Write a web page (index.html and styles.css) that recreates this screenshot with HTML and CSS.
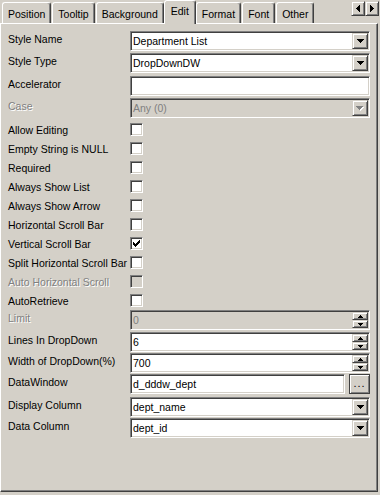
FILE: index.html
```html
<!DOCTYPE html>
<html lang="en">
<head>
  <meta charset="UTF-8">
  <title>Edit Style</title>
  <link rel="stylesheet" href="styles.css">
</head>
<body>
  <div class="tabs">
    <div class="tab">Position</div>
    <div class="tab">Tooltip</div>
    <div class="tab">Background</div>
    <div class="tab active">Edit</div>
    <div class="tab">Format</div>
    <div class="tab">Font</div>
    <div class="tab">Other</div>
    <div class="tab-scroll">
      <span class="btn scroll-btn"><svg width="4" height="7" viewBox="0 0 4 7"><path d="M3 0h1v7h-1v-1h-1v-1h-1v-1h-1v-1h1v-1h1v-1h1z"/></svg></span>
      <span class="btn scroll-btn"><svg width="4" height="7" viewBox="0 0 4 7"><path d="M0 0h1v1h1v1h1v1h1v1h-1v1h-1v1h-1v1h-1z"/></svg></span>
    </div>
  </div>

  <div class="panel">
    <div class="form">
      <div class="row">
        <div class="label">Style Name</div>
        <div class="field combo"><span class="value">Department List</span><span class="btn drop-btn"><svg width="7" height="4" viewBox="0 0 7 4"><path d="M0 0h7v1h-1v1h-1v1h-1v1h-1v-1h-1v-1h-1v-1h-1z"/></svg></span></div>
      </div>
      <div class="row tall">
        <div class="label">Style Type</div>
        <div class="field combo"><span class="value">DropDownDW</span><span class="btn drop-btn"><svg width="7" height="4" viewBox="0 0 7 4"><path d="M0 0h7v1h-1v1h-1v1h-1v1h-1v-1h-1v-1h-1v-1h-1z"/></svg></span></div>
      </div>
      <div class="row">
        <div class="label">Accelerator</div>
        <div class="field"><span class="value"></span></div>
      </div>
      <div class="row">
        <div class="label disabled">Case</div>
        <div class="field combo off"><span class="value">Any (0)</span><span class="btn drop-btn"><svg width="8" height="5" viewBox="0 0 8 5"><path class="shade" d="M1 1h7v1h-1v1h-1v1h-1v1h-1v-1h-1v-1h-1v-1h-1z"/><path class="grey" d="M0 0h7v1h-1v1h-1v1h-1v1h-1v-1h-1v-1h-1v-1h-1z"/></svg></span></div>
      </div>

      <div class="row check">
        <div class="label">Allow Editing</div>
        <span class="box"></span>
      </div>
      <div class="row check">
        <div class="label">Empty String is NULL</div>
        <span class="box"></span>
      </div>
      <div class="row check">
        <div class="label">Required</div>
        <span class="box"></span>
      </div>
      <div class="row check">
        <div class="label">Always Show List</div>
        <span class="box"></span>
      </div>
      <div class="row check">
        <div class="label">Always Show Arrow</div>
        <span class="box"></span>
      </div>
      <div class="row check">
        <div class="label">Horizontal Scroll Bar</div>
        <span class="box"></span>
      </div>
      <div class="row check">
        <div class="label">Vertical Scroll Bar</div>
        <span class="box"><svg width="7" height="7" viewBox="0 0 7 7"><path d="M0 2h1v3h-1z M1 3h1v3h-1z M2 4h1v3h-1z M3 3h1v3h-1z M4 2h1v3h-1z M5 1h1v3h-1z M6 0h1v3h-1z"/></svg></span>
      </div>
      <div class="row check">
        <div class="label">Split Horizontal Scroll Bar</div>
        <span class="box"></span>
      </div>
      <div class="row check">
        <div class="label disabled">Auto Horizontal Scroll</div>
        <span class="box off"></span>
      </div>
      <div class="row check">
        <div class="label">AutoRetrieve</div>
        <span class="box"></span>
      </div>

      <div class="row">
        <div class="label disabled">Limit</div>
        <div class="field spin off"><span class="value">0</span>
          <span class="spin-btns">
            <span class="btn spin-btn"><svg width="5" height="3" viewBox="0 0 5 3"><path d="M2 0h1v1h1v1h1v1h-5v-1h1v-1h1z"/></svg></span>
            <span class="btn spin-btn"><svg width="5" height="3" viewBox="0 0 5 3"><path d="M0 0h5v1h-1v1h-1v1h-1v-1h-1v-1h-1z"/></svg></span>
          </span>
        </div>
      </div>
      <div class="row short">
        <div class="label">Lines In DropDown</div>
        <div class="field spin"><span class="value">6</span>
          <span class="spin-btns">
            <span class="btn spin-btn"><svg width="5" height="3" viewBox="0 0 5 3"><path d="M2 0h1v1h1v1h1v1h-5v-1h1v-1h1z"/></svg></span>
            <span class="btn spin-btn"><svg width="5" height="3" viewBox="0 0 5 3"><path d="M0 0h5v1h-1v1h-1v1h-1v-1h-1v-1h-1z"/></svg></span>
          </span>
        </div>
      </div>
      <div class="row short">
        <div class="label">Width of DropDown(%)</div>
        <div class="field spin"><span class="value">700</span>
          <span class="spin-btns">
            <span class="btn spin-btn"><svg width="5" height="3" viewBox="0 0 5 3"><path d="M2 0h1v1h1v1h1v1h-5v-1h1v-1h1z"/></svg></span>
            <span class="btn spin-btn"><svg width="5" height="3" viewBox="0 0 5 3"><path d="M0 0h5v1h-1v1h-1v1h-1v-1h-1v-1h-1z"/></svg></span>
          </span>
        </div>
      </div>
      <div class="row tall">
        <div class="label">DataWindow</div>
        <div class="field-group">
          <div class="field text-short"><span class="value">d_dddw_dept</span></div>
          <span class="btn dots-btn">...</span>
        </div>
      </div>
      <div class="row short">
        <div class="label">Display Column</div>
        <div class="field combo"><span class="value">dept_name</span><span class="btn drop-btn"><svg width="7" height="4" viewBox="0 0 7 4"><path d="M0 0h7v1h-1v1h-1v1h-1v1h-1v-1h-1v-1h-1v-1h-1z"/></svg></span></div>
      </div>
      <div class="row">
        <div class="label">Data Column</div>
        <div class="field combo"><span class="value">dept_id</span><span class="btn drop-btn"><svg width="7" height="4" viewBox="0 0 7 4"><path d="M0 0h7v1h-1v1h-1v1h-1v1h-1v-1h-1v-1h-1v-1h-1z"/></svg></span></div>
      </div>
    </div>
  </div>
</body>
</html>
```

FILE: styles.css
```css
body {
  margin: 0;
  width: 380px;
  height: 495px;
  overflow: hidden;
  background-color: #d4d0c8;
  font-family: "Liberation Sans", Arial, sans-serif;
  font-size: 10.5px;
  color: #000;
}

svg {
  display: block;
  shape-rendering: crispEdges;
}

/* Tab strip */
.tabs {
  display: flex;
  align-items: flex-end;
  height: 23px;
  padding-left: 2px;
  user-select: none;
}

.tab {
  box-sizing: border-box;
  height: 21px;
  padding: 4px 5px 0;
  line-height: 14px;
  border: 1px solid;
  border-bottom: none;
  border-color: #fff #404040 transparent #fff;
  border-radius: 3px 3px 0 0;
  box-shadow: inset -1px 0 #808080;
  margin-right: 1px;
  white-space: nowrap;
}

.tab.active {
  position: relative;
  z-index: 1;
  height: 24px;
  margin: 0 0 -1px -1px;
  padding: 3px 6px 0;
  background-color: #d4d0c8;
}

.tab-scroll {
  display: flex;
  align-self: flex-start;
  margin: 1px 1px 0 auto;
}

/* Raised button look */
.btn {
  box-sizing: border-box;
  display: flex;
  align-items: center;
  justify-content: center;
  background-color: #d4d0c8;
  border: 1px solid;
  border-color: #d4d0c8 #404040 #404040 #d4d0c8;
  box-shadow: inset 1px 1px #fff, inset -1px -1px #808080;
}

.scroll-btn {
  width: 14px;
  height: 15px;
}

/* Panel */
.panel {
  box-sizing: border-box;
  width: 378px;
  height: 469px;
  border: 1px solid;
  border-color: #fff #404040 #404040 #fff;
  box-shadow: inset -1px -1px #808080;
}

.form {
  padding: 7px 0 0 7px;
}

.row {
  display: flex;
  height: 22px;
}

.row.short {
  height: 21px;
}

.row.tall {
  height: 23px;
}

.label {
  width: 122px;
  flex-shrink: 0;
  line-height: 14px;
  padding-top: 1px;
  white-space: nowrap;
}

.label.disabled {
  color: #808080;
  text-shadow: 1px 1px #fff;
}

.row.check {
  height: 19px;
  align-items: center;
}

.row.check .label {
  padding-top: 0;
}

/* Sunken fields */
.field {
  box-sizing: border-box;
  display: flex;
  width: 240px;
  height: 20px;
  padding: 1px;
  background-color: #fff;
  border: 1px solid;
  border-color: #808080 #fff #fff #808080;
  box-shadow: inset 1px 1px #404040, inset -1px -1px #d4d0c8;
}

.field.off {
  background-color: #d4d0c8;
}

.field.off .value {
  color: #808080;
}

.value {
  flex: 1;
  min-width: 0;
  padding-left: 1px;
  line-height: 16px;
  white-space: nowrap;
  overflow: hidden;
}

.drop-btn {
  width: 16px;
  height: 16px;
  flex-shrink: 0;
}

.drop-btn .shade {
  fill: #fff;
}

.drop-btn .grey {
  fill: #808080;
}

.spin-btns {
  display: flex;
  flex-direction: column;
  flex-shrink: 0;
}

.spin-btn {
  width: 16px;
  height: 8px;
}

.field-group {
  display: flex;
  gap: 4px;
  width: 240px;
}

.field.text-short {
  flex: 1;
  width: auto;
}

.dots-btn {
  width: 21px;
  height: 20px;
  padding-bottom: 2px;
  border-color: #404040;
  font-size: 11px;
  letter-spacing: 1px;
}

/* Checkboxes */
.box {
  box-sizing: border-box;
  display: flex;
  width: 13px;
  height: 13px;
  padding: 2px;
  background-color: #fff;
  border: 1px solid;
  border-color: #808080 #fff #fff #808080;
  box-shadow: inset 1px 1px #404040, inset -1px -1px #d4d0c8;
}

.box.off {
  background-color: #d4d0c8;
}
```
